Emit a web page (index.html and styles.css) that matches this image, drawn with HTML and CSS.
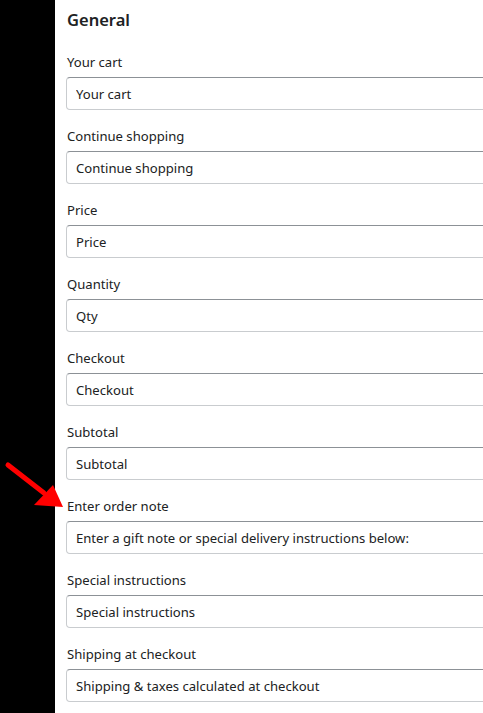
FILE: index.html
```html
<!DOCTYPE html>
<html lang="en">
<head>
<meta charset="utf-8">
<title>General</title>
<link rel="stylesheet" href="styles.css">
</head>
<body>
<div class="page">
  <aside class="sidebar"></aside>
  <main class="main">
    <h2 class="heading">General</h2>
    <div class="fields">
      <div class="field"><label class="label">Your cart</label><input class="input" type="text" value="Your cart"></div>
      <div class="field"><label class="label">Continue shopping</label><input class="input" type="text" value="Continue shopping"></div>
      <div class="field"><label class="label">Price</label><input class="input" type="text" value="Price"></div>
      <div class="field"><label class="label">Quantity</label><input class="input" type="text" value="Qty"></div>
      <div class="field"><label class="label">Checkout</label><input class="input" type="text" value="Checkout"></div>
      <div class="field"><label class="label">Subtotal</label><input class="input" type="text" value="Subtotal"></div>
      <div class="field"><label class="label">Enter order note</label><input class="input" type="text" value="Enter a gift note or special delivery instructions below:"></div>
      <div class="field"><label class="label">Special instructions</label><input class="input" type="text" value="Special instructions"></div>
      <div class="field"><label class="label">Shipping at checkout</label><input class="input" type="text" value="Shipping &amp; taxes calculated at checkout"></div>
    </div>
  </main>
  <svg class="arrow" width="70" height="60" viewBox="0 0 70 60" aria-hidden="true">
    <line x1="8" y1="10" x2="44" y2="38" stroke="#ff0000" stroke-width="5" stroke-linecap="round"/>
    <polygon points="63,52 53,30 34,50" fill="#ff0000"/>
  </svg>
</div>
</body>
</html>
```
FILE: styles.css
```css
html, body {
  margin: 0;
  padding: 0;
  background: #ffffff;
}
.page {
  position: relative;
  display: flex;
  width: 483px;
  height: 713px;
  overflow: hidden;
  font-family: "Noto Sans", "Open Sans", sans-serif;
  color: #202223;
}
.sidebar {
  flex: 0 0 55px;
  background: #000000;
}
.main {
  flex: 1;
  padding-left: 11px;
  overflow: hidden;
}
.heading {
  margin: 8px 0 0 1px;
  font-size: 16.5px;
  line-height: 24px;
  font-weight: 600;
  color: #202223;
}
.fields {
  display: flex;
  flex-direction: column;
  gap: 16px;
  margin-top: 20px;
}
.field {
  display: flex;
  flex-direction: column;
  gap: 5px;
}
.label {
  display: block;
  padding-left: 1px;
  font-size: 13.1px;
  line-height: 20px;
  color: #202223;
}
.input {
  box-sizing: border-box;
  width: 520px;
  height: 33px;
  margin: 0;
  padding: 0 9px;
  border: 1px solid #c9cccf;
  border-top-color: #8c9196;
  border-radius: 4px;
  background: #ffffff;
  font-family: inherit;
  font-size: 13.1px;
  color: #202223;
  outline: none;
}
.arrow {
  position: absolute;
  left: 0;
  top: 455px;
}
```
